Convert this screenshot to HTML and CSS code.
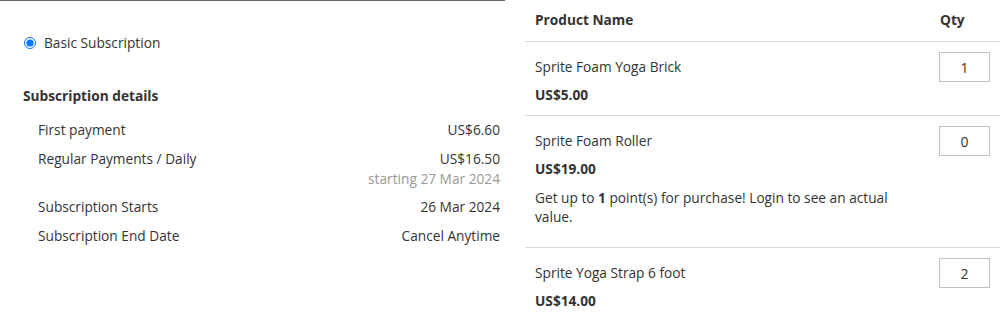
FILE: index.html
```html
<!DOCTYPE html>
<html>
<head>
<meta charset="utf-8">
<link rel="stylesheet" href="styles.css">
</head>
<body>
<div class="page">
  <section class="sub">
    <label class="option">
      <input type="radio" name="plan" checked>
      <span>Basic Subscription</span>
    </label>
    <h3 class="details-title">Subscription details</h3>
    <div class="details">
      <div class="row"><span>First payment</span><span class="val">US$6.60</span></div>
      <div class="row"><span>Regular Payments / Daily</span><span class="val">US$16.50<br><span class="muted">starting 27 Mar 2024</span></span></div>
      <div class="row"><span>Subscription Starts</span><span class="val">26 Mar 2024</span></div>
      <div class="row"><span>Subscription End Date</span><span class="val">Cancel Anytime</span></div>
    </div>
  </section>
  <section class="products">
    <table class="items">
      <thead>
        <tr><th class="col-name">Product Name</th><th class="col-qty">Qty</th></tr>
      </thead>
      <tbody>
        <tr>
          <td class="col-name"><div class="pname">Sprite Foam Yoga Brick</div><div class="price">US$5.00</div></td>
          <td class="col-qty"><input class="qty" type="text" value="1"></td>
        </tr>
        <tr>
          <td class="col-name"><div class="pname">Sprite Foam Roller</div><div class="price">US$19.00</div>
            <p class="points">Get up to <strong>1</strong> point(s) for purchase! Login to see an actual value.</p></td>
          <td class="col-qty"><input class="qty" type="text" value="0"></td>
        </tr>
        <tr>
          <td class="col-name"><div class="pname">Sprite Yoga Strap 6 foot</div><div class="price">US$14.00</div></td>
          <td class="col-qty"><input class="qty" type="text" value="2"></td>
        </tr>
      </tbody>
    </table>
  </section>
</div>
</body>
</html>
```
FILE: styles.css
```css
* { box-sizing: border-box; }
html, body { margin: 0; padding: 0; background: #fff; }
body {
  font-family: "Open Sans", "Liberation Sans", sans-serif;
  font-size: 13.7px;
  line-height: 20px;
  color: #333;
}
.page {
  display: flex;
  gap: 20px;
}
.sub {
  width: 505px;
  flex: none;
  border-top: 1px solid #666;
  padding: 0 5px 0 23px;
}
.option {
  display: flex;
  align-items: center;
  margin-top: 32px;
  height: 20px;
}
.option input {
  margin: 0 8px 0 1px;
  width: 12px;
  height: 12px;
}
.details-title {
  margin: 33px 0 0;
  font-size: 13.7px;
  font-weight: 700;
  line-height: 20px;
}
.details {
  margin-top: 10px;
  padding-left: 15px;
}
.row {
  display: flex;
  justify-content: space-between;
  padding: 4px 0 4.5px;
}
.val { text-align: right; }
.muted { color: #999; }
.products {
  flex: 1;
}
.items {
  width: 100%;
  border-collapse: collapse;
}
.items th {
  text-align: left;
  font-weight: 700;
  padding: 10px 10px 11px;
  border-bottom: 1px solid #d9d9d9;
}
.items td {
  vertical-align: top;
  padding: 10px 10px 10px;
  border-bottom: 1px solid #d9d9d9;
}
.items tbody tr:last-child td { border-bottom: none; }
.col-qty { width: 69px; padding-left: 10px; }
.items th.col-qty { padding-left: 11px; }
.pname { margin-top: 5px; }
.price { font-weight: 700; margin-top: 8px; }
.points { margin: 9px 0 11px; line-height: 19px; }
.qty {
  display: block;
  width: 51px;
  height: 30px;
  border: 1px solid #c2c2c2;
  text-align: center;
  font: inherit;
  font-size: 14px;
  color: #333;
  padding: 0;
}
```
